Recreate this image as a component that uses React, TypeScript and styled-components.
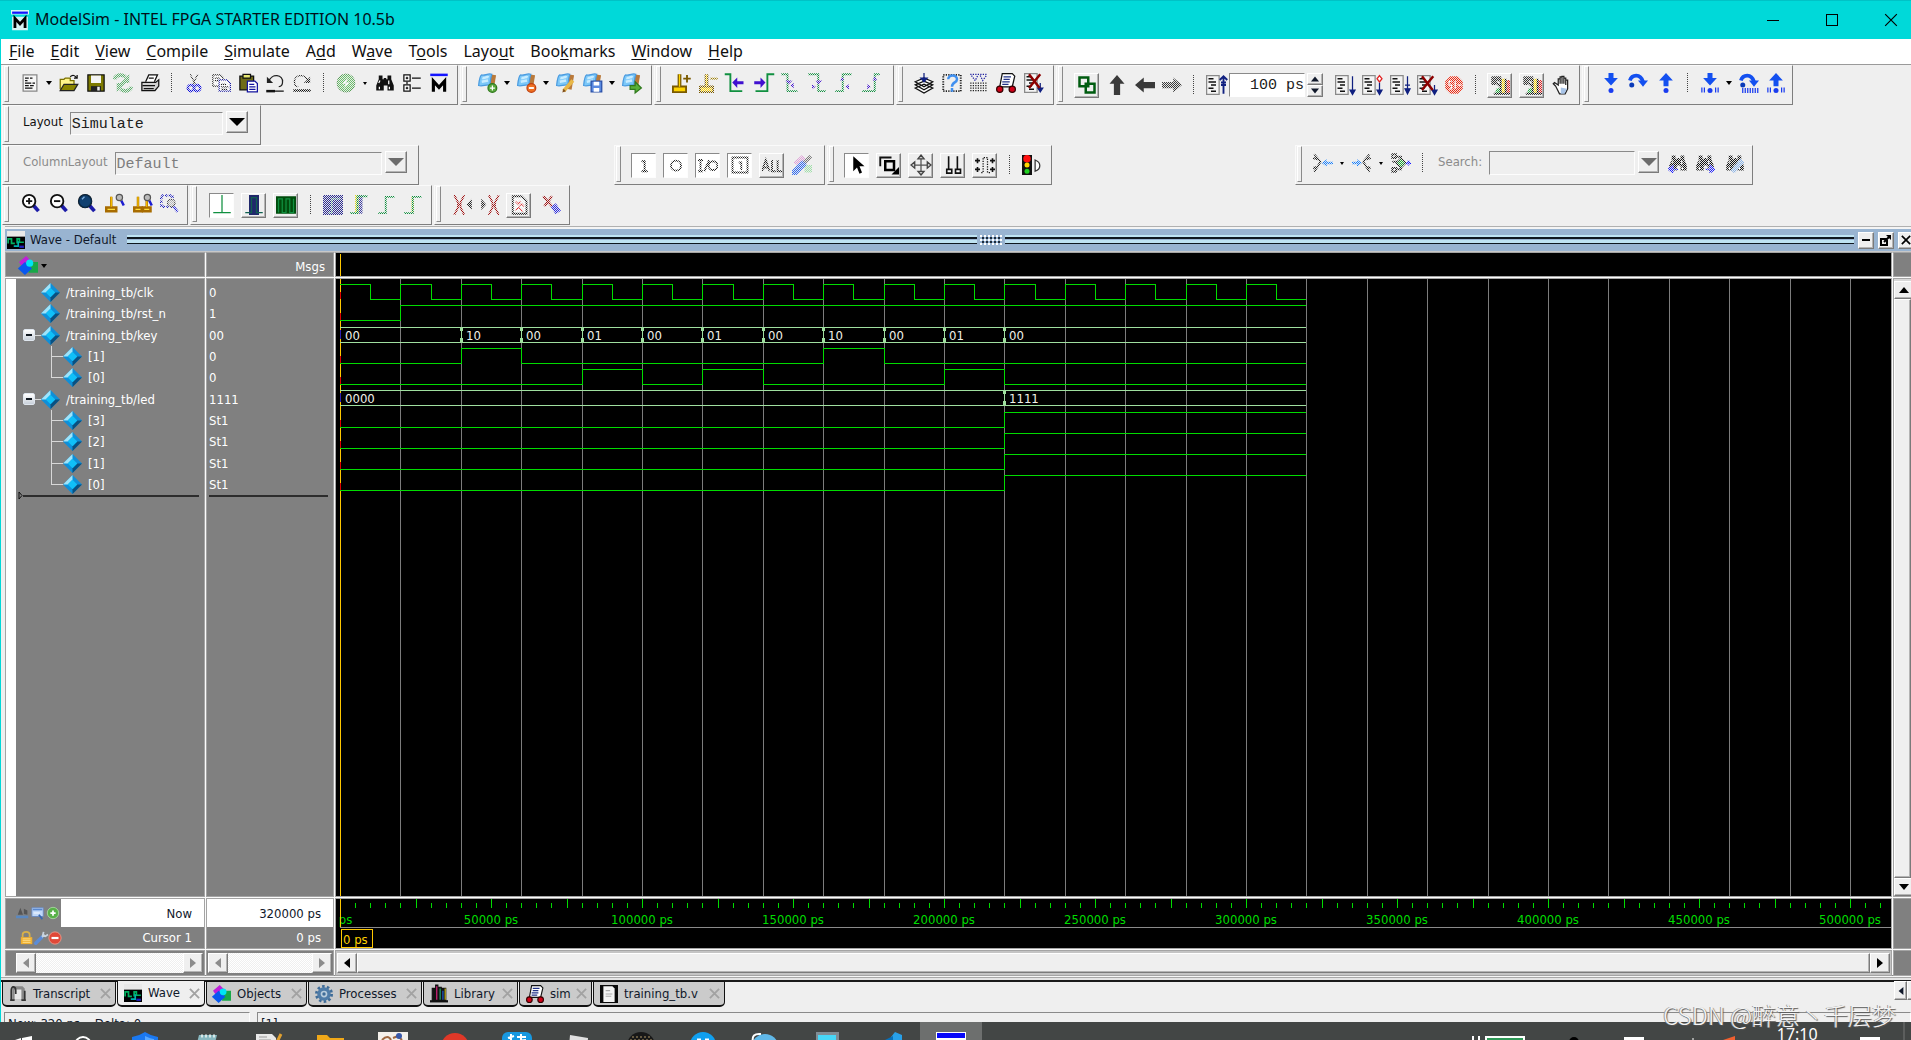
import React from "react";
import styled, { createGlobalStyle, css } from "styled-components";

const UI_FONT = `"DejaVu Sans Condensed", "Noto Sans", sans-serif`;
const CHROME_FONT = `"Noto Sans", "Open Sans", sans-serif`;
const MONO_FONT = `"Liberation Mono", monospace`;
const GREEN = "#00dc00";
const BUS = "#9fdf9f";
const FACE = "#efefef";

const GlobalStyle = createGlobalStyle`
  * { box-sizing: border-box; }
  body { margin: 0; background: ${FACE}; }
  button, input, select { font: inherit; color: inherit; margin: 0; padding: 0; border: 0; background: none; border-radius: 0; }
`;

/* ---------- window ---------- */

const Window = styled.div`
  display: flex;
  flex-direction: column;
  height: 100vh;
  overflow: hidden;
  font-family: ${UI_FONT};
  font-size: 13px;
  color: #10182a;
  background: ${FACE};
`;

const Frame = styled.div`
  flex: 1;
  min-height: 0;
  display: flex;
  flex-direction: column;
  border-left: 1px solid #00d8d8;
`;

const TitleBar = styled.header`
  display: flex;
  align-items: center;
  height: 39px;
  flex: none;
  background: #00d9d9;
  border-top: 1px solid #00c2c6;
  padding-left: 11px;
  color: #001018;
`;

const Title = styled.h1`
  margin: 0 auto 2px 6px;
  font: 400 16px/20px ${CHROME_FONT};
`;

const CaptionButtons = styled.div`
  display: flex;
  margin-right: -9px;
`;

const CaptionButton = styled.button`
  width: 59px;
  height: 38px;
  display: grid;
  place-items: center;
`;

const MenuBar = styled.nav`
  display: flex;
  align-items: flex-start;
  gap: 16px;
  height: 25px;
  flex: none;
  padding-left: 8px;
  background: #fff;
  font: 400 16px/22px ${CHROME_FONT};
  color: #101010;
`;

const MenuItem = styled.button`
  height: 23px;
`;

const Key = styled.span`
  text-decoration: underline;
  text-underline-offset: 2px;
`;

/* ---------- toolbars ---------- */

const Toolbars = styled.div`
  flex: none;
  border-top: 1px solid #9a9a9a;
  padding: 0 0 1px 1px;
`;

const ToolRow = styled.div`
  display: flex;
  height: 40px;
  gap: 2px;
`;

const Group = styled.div<{ $w: number; $gap?: number; $tall?: boolean }>`
  display: flex;
  align-items: center;
  flex: none;
  width: ${(p) => p.$w}px;
  height: 40px;
  margin-left: ${(p) => p.$gap ?? 0}px;
  padding-bottom: ${(p) => (p.$tall ? 0 : 4)}px;
  border: 1px solid;
  border-color: #fafafa #7e7e7e #7e7e7e #fafafa;
`;

const Handle = styled.span<{ $pad?: number }>`
  align-self: flex-start;
  flex: none;
  width: 5px;
  height: 36px;
  margin-left: 1px;
  margin-right: ${(p) => p.$pad ?? 7}px;
  border: 1px solid;
  border-color: #fff #8a8a8a #8a8a8a #fff;
`;

const raised = css`
  border: 1px solid;
  border-color: #fff #7a7a7a #7a7a7a #fff;
  box-shadow: inset -1px -1px #b4b4b4;
  background: ${FACE};
`;

const sunken = css`
  border: 1px solid;
  border-color: #8a8a8a #fdfdfd #fdfdfd #8a8a8a;
`;

const Tool = styled.button<{ $w?: number; $look?: "raised" | "sunken" }>`
  display: grid;
  place-items: center;
  flex: none;
  width: ${(p) => p.$w ?? 27}px;
  height: 25px;
  ${(p) =>
    p.$look &&
    css`
      width: 25px;
      margin: 0 4px 0 3px;
    `}
  ${(p) => p.$look === "raised" && raised}
  ${(p) => p.$look === "sunken" && css`${sunken} background: #fff;`}
`;

const Caret = styled.button<{ $small?: boolean }>`
  width: 12px;
  height: 25px;
  flex: none;
  display: grid;
  place-items: center;
  &::after {
    content: "";
    border: solid transparent;
    border-width: ${(p) => (p.$small ? "3px 2px 0" : "4px 3px 0")};
    border-top-color: #000;
  }
`;

const Divider = styled.span<{ $w?: number }>`
  flex: none;
  width: ${(p) => p.$w ?? 17}px;
  height: 20px;
  background: repeating-linear-gradient(#444 0 1px, transparent 1px 2px) center / 1px 20px no-repeat;
`;

const Glyph = styled.svg<{ $off?: boolean }>`
  display: block;
  width: 20px;
  height: 20px;
  overflow: visible;
  ${(p) =>
    p.$off &&
    css`
      mask-image: repeating-conic-gradient(#000 0 25%, rgba(0, 0, 0, 0.05) 0 50%);
      mask-size: 2px 2px;
    `}
`;

const ComboLabel = styled.label<{ $off?: boolean }>`
  font-size: 13px;
  line-height: 18px;
  margin: 0 7px 2px 7px;
  color: ${(p) => (p.$off ? "#8b8b8b" : "#101010")};
`;

const ComboField = styled.select<{ $w: number; $off?: boolean }>`
  appearance: none;
  ${sunken}
  width: ${(p) => p.$w}px;
  height: 23px;
  padding: 3px 0 0 1px;
  font: 400 15px/18px ${MONO_FONT};
  color: ${(p) => (p.$off ? "#7d7d7d" : "#202020")};
  opacity: 1;
`;

const SearchField = styled.input`
  ${sunken}
  width: 146px;
  height: 24px;
`;

const DropButton = styled.button<{ $off?: boolean }>`
  ${raised}
  display: grid;
  place-items: center;
  width: 22px;
  height: 22px;
  margin: 0 5px 2px 3px;
  &::after {
    content: "";
    border: solid transparent;
    border-width: 8px 8px 0;
    border-top-color: ${(p) => (p.$off ? "#6c6c6c" : "#000")};
  }
`;

const RunLength = styled.input`
  width: 76px;
  height: 24px;
  border: 1px solid;
  border-color: #8a8a8a #fff #fff #8a8a8a;
  background: #fff;
  padding: 1px 0 0 0;
  text-align: right;
  font: 400 15px/22px ${MONO_FONT};
  color: #202020;
`;

const Spinner = styled.div`
  display: flex;
  flex-direction: column;
  margin: 0 8px 0 2px;
`;

const SpinButton = styled.button`
  ${raised}
  width: 16px;
  height: 12px;
  display: grid;
  place-items: center;
`;

/* ---------- wave panel ---------- */

const Panel = styled.section`
  flex: 1;
  min-height: 0;
  display: flex;
  flex-direction: column;
  margin-left: 4px;
  border-top: 1px solid #b0b0b0;
`;

const PanelTitle = styled.div`
  display: flex;
  align-items: center;
  height: 26px;
  flex: none;
  margin-right: -3px;
  padding-left: 2px;
  background: #99b4d1;
  border-top: 2px solid #f4f4f4;
  border-bottom: 2px solid #c8c8c8;
  overflow: hidden;
`;

const PanelName = styled.h2`
  margin: 0 11px 0 5px;
  font: 400 13px/18px ${UI_FONT};
  white-space: nowrap;
`;

const Rails = styled.div`
  flex: 1;
  height: 10px;
  background: linear-gradient(
    #bfe3f2 0 2px, #101820 2px 4px, #99b4d1 4px 5px, #bfe3f2 5px 8px, #101820 8px 9px, transparent 9px);
`;

const GripDots = styled.div`
  width: 22px;
  height: 10px;
  margin: 0 3px;
  background:
    radial-gradient(circle at 1px 1px, #fff 1px, transparent 1px) 0 0 / 4px 4px,
    radial-gradient(circle at 3px 3px, #1c2a3a 1px, transparent 1px) 0 0 / 4px 4px;
`;

const PanelButton = styled.button`
  ${raised}
  width: 16px;
  height: 17px;
  margin-left: 4px;
  flex: none;
  display: grid;
  place-items: center;
`;

const WaveGrid = styled.div`
  flex: 1;
  min-height: 0;
  display: grid;
  grid-template-columns: 198px 126px minmax(0, 1fr) 17px;
  grid-template-rows: 23px minmax(0, 1fr) 49px 24px;
  gap: 3px;
  padding-left: 1px;
  background: #fbfbfb;
  border-bottom: 1px solid #8a8a8a;
`;

const Pane = styled.div<{ $color?: string }>`
  min-width: 0;
  min-height: 0;
  overflow: hidden;
  background: ${(p) => p.$color ?? "#808080"};
  outline: 1px solid #a4a4a4;
  outline-offset: 0;
  color: #fff;
`;

const HeaderPane = styled(Pane)<{ $end?: boolean }>`
  display: flex;
  align-items: center;
  justify-content: ${(p) => (p.$end ? "flex-end" : "flex-start")};
  padding: ${(p) => (p.$end ? "3px 8px 0" : "2px 13px 0")};
`;

const NamesPane = styled(Pane)`
  border-left: 10px solid #fff;
  padding-top: 3px;
`;

const ValuesPane = styled(Pane)`
  padding: 3px 5px 0 2px;
`;

const SignalList = styled.ul`
  list-style: none;
  margin: 0;
  padding: 0;
  height: 213px;
  display: grid;
  grid-template-rows: repeat(10, 1fr);
`;

const SignalRow = styled.li`
  display: flex;
  align-items: center;
  min-height: 0;
  white-space: pre;
`;

const Expander = styled.button`
  width: 12px;
  height: 12px;
  margin-left: 7px;
  flex: none;
  background: linear-gradient(#fff, #c8d0da);
  border: 1px solid #dfe6ee;
  border-radius: 2px;
  display: grid;
  place-items: center;
  &::after {
    content: "";
    width: 6px;
    height: 2px;
    background: #101820;
  }
`;

const Twig = styled.span<{ $w: number; $bare?: boolean }>`
  flex: none;
  width: ${(p) => p.$w}px;
  height: 1px;
  background: ${(p) => (p.$bare ? "transparent" : "#d8d8d8")};
`;

const Branch = styled.span<{ $last?: boolean }>`
  flex: none;
  align-self: stretch;
  width: 12px;
  margin-left: 35px;
  background:
    linear-gradient(#d8d8d8, #d8d8d8) 0 0 / 1px ${(p) => (p.$last ? "50%" : "100%")} no-repeat,
    linear-gradient(#d8d8d8, #d8d8d8) 0 50% / 100% 1px no-repeat;
`;

const SignalName = styled.span`
  margin-left: 6px;
`;

const InsertRow = styled.div<{ $inset?: number }>`
  display: flex;
  align-items: center;
  height: 9px;
  margin: -4px ${(p) => (p.$inset ? 5 : 0)}px 0 ${(p) => p.$inset ?? 0}px;
`;

const InsertLine = styled.div`
  flex: 1;
  height: 2px;
  background: #2c2c2c;
`;

const FooterRow = styled.div<{ $tall?: boolean; $light?: boolean }>`
  display: flex;
  align-items: center;
  height: ${(p) => (p.$tall ? 28 : 21)}px;
  background: ${(p) => (p.$light ? "#fff" : "#808080")};
  color: ${(p) => (p.$light ? "#10182a" : "#fff")};
  padding-right: 12px;
`;

const FooterTools = styled.div<{ $inset: number }>`
  align-self: stretch;
  display: flex;
  align-items: center;
  width: 55px;
  padding-left: ${(p) => p.$inset}px;
  background: #808080;
`;

const FooterButton = styled.button`
  width: 15px;
  height: 16px;
`;

const FooterText = styled.span`
  margin-left: auto;
`;

const Chart = styled.svg`
  display: block;
  width: 100%;
  height: 100%;
  font: 400 13px ${UI_FONT};
`;

const HScroll = styled(Pane)<{ $lead?: number }>`
  display: flex;
  align-items: stretch;
  padding: 2px 1px 2px ${(p) => p.$lead ?? 1}px;
`;

const VScroll = styled(Pane)`
  display: flex;
  flex-direction: column;
  padding-top: 2px;
  background: #d8d8d8;
`;

const ScrollButton = styled.button<{ $off?: boolean }>`
  ${raised}
  flex: none;
  width: 20px;
  min-height: 18px;
  display: grid;
  place-items: center;
  color: ${(p) => (p.$off ? "#8c8c8c" : "#000")};
`;

const Trough = styled.div`
  flex: 1;
  background: repeating-conic-gradient(#fff 0 25%, #efefef 0 50%) 0 0 / 2px 2px;
`;

const Thumb = styled.div`
  ${raised}
  flex: 1;
`;

/* ---------- bottom ---------- */

const TabStrip = styled.div`
  display: flex;
  align-items: flex-start;
  flex: none;
  height: 35px;
  padding: 5px 0 0 1px;
  background: linear-gradient(#f6f6f6 0 1px, #a8a8a8 1px 2px, #e4e4e4 2px 4px, #1a1a1a 4px 6px, ${FACE} 6px);
`;

const Tab = styled.div<{ $w: number; $active?: boolean }>`
  display: flex;
  align-items: center;
  width: ${(p) => p.$w}px;
  height: 26px;
  padding: 0 4px 0 6px;
  margin-right: 1px;
  background: ${(p) => (p.$active ? FACE : "#cbcbcb")};
  border: 1px solid #111;
  border-width: ${(p) => (p.$active ? "0 1px 2px" : "1px 1px 2px")};
  border-radius: 0 0 5px 5px;
`;

const TabName = styled.button`
  margin-left: 6px;
  font-size: 13px;
  line-height: 18px;
`;

const TabClose = styled.button`
  margin-left: auto;
  width: 12px;
  height: 16px;
  display: grid;
  place-items: center;
`;

const TabScroll = styled.div`
  margin-left: auto;
  display: flex;
  width: 17px;
  overflow: hidden;
`;

const TabScrollButton = styled.button`
  ${raised}
  flex: none;
  width: 13px;
  height: 19px;
  display: grid;
  place-items: center;
`;

const StatusBar = styled.footer`
  display: flex;
  gap: 7px;
  height: 11px;
  flex: none;
  overflow: hidden;
  padding: 1px 0 0 3px;
  background: ${FACE};
`;

const StatusCell = styled.div<{ $w?: number }>`
  ${sunken}
  flex: ${(p) => (p.$w ? "none" : 1)};
  width: ${(p) => p.$w ?? 0}px;
  height: 24px;
  padding: 2px 3px;
  line-height: 18px;
  white-space: pre;
`;

const Taskbar = styled.div`
  display: flex;
  align-items: flex-start;
  flex: none;
  height: 18px;
  overflow: hidden;
  background: #434645;
  color: #fff;
`;

const TaskButton = styled.button<{ $w?: number; $active?: boolean }>`
  flex: none;
  width: ${(p) => p.$w ?? 62}px;
  height: 40px;
  padding-top: 10px;
  display: flex;
  justify-content: center;
  background: ${(p) => (p.$active ? "#6d6f6e" : "none")};
`;

const Tray = styled.div`
  margin-left: auto;
  display: flex;
  width: 440px;
`;

const Clock = styled.time`
  margin-top: 2px;
  font: 400 16px/20px ${CHROME_FONT};
`;

const Watermark = styled.div`
  position: absolute;
  right: 15px;
  bottom: 9px;
  font: 300 24px/32px "Noto Sans CJK SC", sans-serif;
  color: #f4f4f4;
  text-shadow: 1px 1px 1px #555, -1px 0 0 #999;
  white-space: pre;
`;

/* ---------- icon drawings, all on a 16 x 16 canvas ---------- */

const page = (
  <>
    <path d="M0.500 0.500h10v15h-10z" fill="#f4f4f4" stroke="#8a8a8a" />
    <path d="M2 3h4M2 5.500h6M4 8h4M2 10.500h4M4 13h4" stroke="#111" strokeWidth="1.200" />
  </>
);
const redX = <path d="M4 1L12.500 12M13 1L4 12" stroke="#8c0000" strokeWidth="2" />;
const flag = (
  <>
    <path d="M12.500 1.500L10.500 13" stroke="#b9793a" strokeWidth="4" />
    <path d="M0.500 10C1 5 1.500 2 3 1.500C5 2.500 8 0 11 1C10 4 10 6 9.500 9.500C6 9 4 11 0.500 10Z" fill="#7cc8f8" stroke="#4a9be0" />
    <path d="M3.500 4C5 4.500 7 2.500 8.500 3.500M3 7l5-1" stroke="#c8ecff" strokeWidth="2" fill="none" />
  </>
);
const binoculars = (
  <>
    <path d="M3 2h3v3h1V4h2v1h1V2h3v3l2 5v4h-5v-4H7v4H1v-4l2-5z" fill="#111" />
    <path d="M3 8l1-2M11 6v3M3.500 11v2M11.500 11v2" stroke="#fff" />
  </>
);
const mLogo = (
  <>
    <path d="M1 1.500h14" stroke="#1414ff" strokeWidth="2" />
    <path d="M3.500 15V6.500L8 11.500L12.500 6.500V15" stroke="#000" strokeWidth="2.500" fill="none" />
  </>
);
const lens = (
  <>
    <path d="M10 10l4 4.500" stroke="#1c1ca8" strokeWidth="3" />
    <circle cx="6.500" cy="6.500" r="5" fill="#fff" stroke="#111" strokeWidth="1.500" />
  </>
);
const smallLens = (
  <>
    <path d="M13 6l2 4" stroke="#1c1cd0" strokeWidth="2" />
    <circle cx="11.500" cy="3.500" r="2.500" fill="#bbb" stroke="#555" />
  </>
);
const goldCursor = (
  <>
    <path d="M6 1v10M1.500 11.500h9v3h-9z" stroke="#7a5a00" strokeWidth="3" fill="#7a5a00" />
    <path d="M6 1v10M2 12h8v2H2z" stroke="#ffd400" fill="#ffd400" />
  </>
);
const goldPost = (x: number, w: number) => (
  <>
    <path d={`M${x} 3v8M${x - w} 11.500h${w * 2}v3h-${w * 2}z`} stroke="#a86c00" strokeWidth="2" fill="#ffe040" />
    <path d={`M${x} 3v8`} stroke="#ffc800" />
  </>
);
const shapes = (
  <>
    <path d="M0 5l6-5 4 4-4 5-4-1z" fill="#c020d8" />
    <path d="M9 5h7v9H8z" fill="#18a848" />
    <path d="M5 5l6 5.500L5 16-1 10.500z" fill="#0858f0" />
    <circle cx="9" cy="6" r="3" fill="#00e4f4" />
  </>
);
const script = (
  <>
    <path d="M5 0.500h8l2 2-2 8.500H5L3 11z" fill="#fff" stroke="#111" />
    <path d="M6 3h6M6 5h5M5 7h6M5 9h5" stroke="#223388" />
    <circle cx="3" cy="13" r="2.500" fill="#d00018" stroke="#300" />
    <circle cx="13" cy="13" r="2.500" fill="#d00018" stroke="#300" />
  </>
);
const blueDot = <circle cx="8" cy="14" r="2" fill="#1a3cf0" />;
const dashes = <path d="M1.500 11.500v4M3.500 11.500v4M12.500 11.500v4M14.500 11.500v4" stroke="#1a3cf0" />;
const downArrow = <path d="M6 0h4v4h3.500L8 10 2.500 4H6z" fill="#1450f0" />;
const upArrow = <path d="M8 0l5.500 6H10v4.500H6V6H2.500z" fill="#1450f0" />;
const overArrow = (
  <>
    <path d="M1.500 6C3 1 10 0 12 7" stroke="#1450f0" strokeWidth="3" fill="none" />
    <path d="M8 6h8l-4 5z" fill="#1450f0" />
    <circle cx="3" cy="9.500" r="2" fill="#0a3ab8" />
  </>
);
const waveIcon = (
  <>
    <path d="M0 0h16v16H0z" fill="#000" />
    <path d="M0 0h16v5H0z" fill="#e8e8e8" />
    <path d="M1 11V7h3v4h3M9 11V7h2v3h4" stroke="#00b060" strokeWidth="1.500" fill="none" />
    <path d="M6 13.500h4V9" stroke="#00b0b0" strokeWidth="1.500" fill="none" />
    <path d="M11 14h4" stroke="#2020c0" strokeWidth="2" />
  </>
);
const bluePad = <path d="M4 0h8v16H4z" fill="#20286c" />;

const ICONS: Record<string, React.ReactNode> = {
  doc: (
    <>
      <path d="M2.500 1.500h11v13h-11z" fill="#f6f6f6" stroke="#888" />
      <path d="M4 4h3M8 4h2M4 6h2M4 8h5M10 8h2M4 10h3M8 10h3M4 12h6" stroke="#111" />
    </>
  ),
  open: (
    <>
      <path d="M1 13V5h3l1-1h4v2h3v3" fill="#fff48a" stroke="#7a7000" />
      <path d="M1 14l3-5h11l-3 5z" fill="#8a8400" stroke="#222" />
      <path d="M9 3c2-2 4-1 5 1M12 4h2.500V1.500" stroke="#111" fill="none" />
    </>
  ),
  save: (
    <>
      <path d="M1.500 1.500h13v13h-13z" fill="#7d7a00" stroke="#111" />
      <path d="M4 2h8v6H4z" fill="#f4f4f4" />
      <path d="M4 10.500h8v4H4z" fill="#222" />
      <path d="M9 11h2v3H9z" fill="#eee" />
    </>
  ),
  refresh: (
    <>
      <path d="M1 5C3 1 7 1 10 3" stroke="#5cb06c" strokeWidth="3" fill="none" />
      <path d="M13 1v7H6z" fill="#5cb06c" />
      <path d="M15 11C13 15 9 15 6 13" stroke="#5cb06c" strokeWidth="3" fill="none" />
      <path d="M3 15V8h7z" fill="#5cb06c" />
    </>
  ),
  print: (
    <>
      <path d="M4.500 7L7 1.500h7L11.500 7" fill="#fff" stroke="#111" />
      <path d="M1.500 7.500h11l2.500-2v5l-3 3.500H1.500z" fill="#d0d0d0" stroke="#111" />
      <path d="M2 10h10M3 12.500h8M7 4h4" stroke="#111" />
    </>
  ),
  cut: (
    <>
      <path d="M5 1l4 8M11 1L7 9" stroke="#333" />
      <circle cx="5.500" cy="12" r="2.500" fill="none" stroke="#1010e0" strokeWidth="2" />
      <circle cx="10.500" cy="12" r="2.500" fill="none" stroke="#1010e0" strokeWidth="2" />
    </>
  ),
  copy: (
    <>
      <path d="M1.500 1.500h6l2 2v7h-8z" fill="#fff" stroke="#222" />
      <path d="M6.500 5.500h6l3 3v6h-9z" fill="#fff" stroke="#1414a0" />
      <path d="M3 4h4M3 6h3M8 9h4M8 11h6M8 13h5" stroke="#222" />
    </>
  ),
  paste: (
    <>
      <path d="M1.500 2.500h11v11h-11z" fill="#6f6c18" stroke="#111" />
      <path d="M4 1h6v3H4z" fill="#e8e870" stroke="#111" />
      <path d="M7.500 6.500h6l2 2v6.500h-8z" fill="#fff" stroke="#1414a0" />
      <path d="M9 9h4M9 11h5M9 13h5" stroke="#1414a0" />
    </>
  ),
  undo: (
    <>
      <path d="M3 7C5 0 15 1 14 7.500c0 2-1 3-3 3.500" stroke="#222" fill="none" />
      <path d="M1.500 3v5h5z" fill="#222" />
      <path d="M1 14.500h7" stroke="#111" strokeWidth="2" />
      <path d="M8 14.500h7" stroke="#111" strokeWidth="1" />
    </>
  ),
  redo: (
    <>
      <path d="M13 7C11 0 1 1 2 7.500c0 2 1 3 3 3.500" stroke="#222" fill="none" />
      <path d="M14.500 3v5h-5z" fill="#222" />
      <path d="M1 14h14" stroke="#111" strokeWidth="2" />
    </>
  ),
  compile: (
    <>
      <circle cx="8" cy="8" r="7" fill="#6cc06c" stroke="#5aa05a" />
      <path d="M10 3L5 8.500h3L6 13l5-5.500H8z" fill="#fff" />
    </>
  ),
  find: binoculars,
  tree: (
    <>
      <path d="M1.500 1.500h5v5h-5zM1.500 9.500h5v5h-5z" fill="#fff" stroke="#111" />
      <path d="M3 4h2M4 3v2M3 12h2M4 11v2M8 4h7M8 12h7M4 7v2" stroke="#111" />
    </>
  ),
  m: mLogo,
  flagAdd: (<>{flag}<circle cx="11.500" cy="12" r="3.500" fill="#5aa83c" stroke="#2f7a1c" /><path d="M9.500 12h4M11.500 10v4" stroke="#fff" /></>),
  flagDel: (<>{flag}<circle cx="11.500" cy="12" r="3.500" fill="#f07020" stroke="#c04010" /><path d="M9.500 12h4" stroke="#fff" strokeWidth="1.500" /></>),
  flagEdit: (<>{flag}<path d="M6 14.500L13.500 6" stroke="#e8b848" strokeWidth="3" /><path d="M5 15.500l1-3 2 2z" fill="#805020" /></>),
  flagSave: (<>{flag}<path d="M6.500 6.500h8.500v8.500H6.500z" fill="#5a8ae0" stroke="#2a50a8" /><path d="M8.500 7h4.500v3H8.500zM8.500 12h4.500v3H8.500z" fill="#fff" /></>),
  flagGo: (<>{flag}<path d="M6.500 10h4V7l5 5-5 4v-3h-4z" fill="#58b038" stroke="#2f7a1c" /></>),
  cursorAdd: (<>{goldCursor}<path d="M9 4.500h6M12 1.500v6" stroke="#7a5a00" strokeWidth="1.500" /></>),
  cursorDel: (<>{goldCursor}<path d="M9 4.500h6" stroke="#a08000" strokeWidth="1.500" /></>),
  edgeLeft: (<><path d="M-1 1h4.500v13.500H13" stroke="#109040" strokeWidth="1.500" fill="none" /><path d="M5 7.500l4-4v3h5v2.500H9v3z" fill="#4010d0" /></>),
  edgeRight: (<><path d="M2 14.500h9.500V1H17" stroke="#109040" strokeWidth="1.500" fill="none" /><path d="M10 7.500l-4-4v3H1v2.500h5v3z" fill="#4010d0" /></>),
  fallPrev: (<><path d="M1 1h5v13.500h8" stroke="#109040" strokeWidth="1.500" fill="none" /><path d="M4 6l3 3 3-3zM8 10l3-2v4z" fill="#4010d0" /></>),
  fallNext: (<><path d="M1 1h8v13.500h6" stroke="#109040" strokeWidth="1.500" fill="none" /><path d="M7 6l2 3 3-3zM7 11l-3-2v4z" fill="#4010d0" /></>),
  risePrev: (<><path d="M1 14.500h6V1h7" stroke="#109040" strokeWidth="1.500" fill="none" /><path d="M5 6l3 0-1.500-3zM9 11l3-2v4z" fill="#4010d0" /></>),
  riseNext: (<><path d="M1 14.500h10V1h4" stroke="#109040" strokeWidth="1.500" fill="none" /><path d="M9 6h4l-2-3zM8 11L5 9v4z" fill="#4010d0" /></>),
  stack: (<><path d="M1 12l7-3 7 3-7 4zM1 9.500l7-3 7 3-7 4zM1 7l7-3 7 3-7 4z" fill="#fff" stroke="#111" /><path d="M8 0v6M5.500 4L8 7l2.500-3z" stroke="#102080" fill="#102080" /></>),
  help: (<><path d="M1 1.500h14v13H1z" fill="none" stroke="#222" strokeWidth="1.500" strokeDasharray="1 1" /><path d="M5 5c0-4 7-4 7 0 0 3-4 2-4 6M8 12v3" stroke="#4090f0" strokeWidth="2" fill="none" /></>),
  calendar: (<><path d="M1 8h14M1 10h14M1 12h14M1 14h14" stroke="#222" strokeDasharray="1 1" /><path d="M1 1h14" stroke="#2020a0" strokeDasharray="1 1" /><path d="M2 2l3 4 2-4M9 2l2 4 3-4" stroke="#2020a0" strokeDasharray="1 1" fill="none" /></>),
  script,
  endSim: (<>{page}<path d="M13 8v6M11 12l2 3 2-3z" stroke="#102080" fill="#102080" />{redX}</>),
  link: (<path d="M2 2h7v7H2zM7 7h7v7H7z" fill="none" stroke="#005c10" strokeWidth="2" />),
  up: (<path d="M8 0l6 7h-3.500v9h-5V7H2z" fill="#3a3a3a" />),
  left: (<path d="M0 8l7-6v3.500h9v5H7V14z" fill="#3a3a3a" />),
  right: (<path d="M16 8L9 2v3.500H0v5h9V14z" fill="#3a3a3a" />),
  restart: (<>{page}<path d="M14 15V2M12 6h4M11 4l3-3 3 3M12 8h4" stroke="#102080" strokeWidth="1.500" fill="none" /></>),
  run: (<>{page}<path d="M14 1v13M12 12L14 15.500 16 12z" stroke="#102080" fill="#102080" /></>),
  runCont: (<>{page}<path d="M14 6v8M12 12l2 3.500 2-3.500z" stroke="#102080" fill="#102080" /><path d="M14 0.500l2 2.500-2 2.500-2-2.500z" stroke="#e02020" fill="#fff" /></>),
  runAll: (<>{page}<path d="M14 1v13M12 11l2 4 2-4zM12 8h4" stroke="#102080" fill="#102080" /></>),
  breakRun: (<>{page}<path d="M14 8v6M12 12l2 3.500 2-3.500z" stroke="#102080" fill="#102080" />{redX}</>),
  stop: (<><path d="M5 1h6l4 4v6l-4 4H5l-4-4V5z" fill="#f02810" /><path d="M6 5h-2v3h2v3H4M9 5v6M11 8h3" stroke="#fff" fill="none" /></>),
  profile: (<><path d="M1 1h8v4H5v3H1z" fill="#333" /><path d="M9 3h3v12H9z" fill="#ffd800" /><path d="M13 4h3v11h-3z" fill="#e02020" /><path d="M5 11l4-1v5H4z" fill="#20b040" /><path d="M5 6l3 3M3 15h13M8.500 3v11M12.500 3v11" stroke="#111" strokeWidth="1.500" /></>),
  hand: (<><path d="M3 9L1 7l1-1 3 2V3h1.500v4V1.500H8V7V1h1.500v6V2.500H11V8v-4h1.500v7l-2 4H6z" fill="#fff" stroke="#222" /><path d="M7 10l5 1-2 4H7z" fill="#a8c4e8" /></>),
  stepIn: (<>{downArrow}{blueDot}</>),
  stepOver: overArrow,
  stepOut: (<>{upArrow}{blueDot}</>),
  stepInC: (<>{downArrow}{blueDot}{dashes}</>),
  stepOverC: (<>{overArrow}<path d="M3 12v4M5 12v4M7 12v4M9 12v4M11 12v4M13 12v4M15 12v4" stroke="#1a3cf0" /></>),
  stepOutC: (<>{upArrow}{blueDot}{dashes}</>),
  filtI: (<path d="M6 5h2.500v8M6 13h5" stroke="#111" fill="none" strokeWidth="1.500" />),
  filtO: (<circle cx="8" cy="8.500" r="4" fill="none" stroke="#222" strokeWidth="1.500" />),
  filtIO: (<><path d="M0 4h4M2 4v9M0 13h4M5 13l4-9" stroke="#222" strokeWidth="1.500" fill="none" /><circle cx="12" cy="8.500" r="3.500" fill="none" stroke="#222" strokeWidth="1.500" /></>),
  filtN: (<path d="M2 2h12v12H2zM7 6h2v6" fill="none" stroke="#222" strokeWidth="1.500" />),
  filtAll: (<path d="M0 13l3-9 3 9M1.500 10h3M8 4v9h3M12.500 4v9H16" fill="none" stroke="#222" strokeWidth="1.500" />),
  filtEdit: (<><path d="M1 6L8 0l3 3-7 5z" fill="#e0a0d8" /><path d="M10 8h6v6h-6z" fill="#a0e0a8" /><path d="M2 14L9 7" stroke="#2c68f0" strokeWidth="5" strokeLinecap="round" /><path d="M10 6l5-5" stroke="#777" strokeWidth="3" /></>),
  pointer: (<path d="M5 1v12l3-3 2 5 2-1-2-5h4z" fill="#000" />),
  zoomBox: (<><path d="M1 9V2h9" stroke="#111" strokeWidth="1.500" fill="none" /><path d="M5 5h7v7H5z" fill="none" stroke="#000" strokeWidth="2" /><path d="M10 15.500h6v-6z" fill="#000" /></>),
  pan: (<><path d="M8 1v14M1 8h14" stroke="#555" /><path d="M8 0l2.500 3h-5zM8 16l2.500-3h-5zM0 8l3-2.500v5zM16 8l-3-2.500v5z" fill="#ccc" stroke="#444" /></>),
  twoCur: (<path d="M4.500 1v10M3 11.500h4v3H3zM11.500 1v10M10 11.500h4v3h-4z" fill="#fff" stroke="#111" strokeWidth="1.300" />),
  editWave: (<><path d="M0 4.500h4M0 11.500h4M2 2.500v4M2 9.500v4M12 4.500h4M12 11.500h4M14 2.500v4M14 9.500v4" stroke="#111" strokeWidth="1.300" /><path d="M5 14h1.500V2H10v12h2" stroke="#111" fill="none" strokeDasharray="1 1" /></>),
  traffic: (<><path d="M0 0h8v16H0z" fill="#111" /><circle cx="4" cy="3" r="3" fill="#ff1010" /><circle cx="4" cy="8" r="2" fill="#ffd800" /><circle cx="4" cy="13" r="2" fill="#20d020" /><path d="M10.500 4v9c5-2 5-7 0-9z" fill="#fff" stroke="#333" /></>),
  mergeL: (<><path d="M1 1l5 6-5 8M0 4l4 1M0 12l4-1" stroke="#222" strokeWidth="1.500" fill="none" /><path d="M7 8l4-3v2h5v2h-5v2z" fill="#1880ff" /></>),
  mergeR: (<><path d="M14 1L9 7l5 8M15 4l-4 1M15 12l-4-1" stroke="#222" strokeWidth="1.500" fill="none" /><path d="M8 8L4 5v2H0v2h4v2z" fill="#1880ff" /></>),
  hub: (<><path d="M1 1h3v3H1zM1 12h3v3H1zM1 7h5M4 3h4v3M4 13h4v-3" fill="none" stroke="#222" strokeWidth="1.500" /><path d="M8 4l4 4-4 4-4-4z" fill="#20a838" stroke="#222" /><path d="M12 8h4M14 6v4" stroke="#1818ff" strokeWidth="1.500" /></>),
  findPrev: (<>{binoculars}<path d="M0 13l4-3v6zM4 13h4" fill="#2020ff" stroke="#2020ff" /></>),
  findNext: (<>{binoculars}<path d="M16 13l-4-3v6zM8 13h4" fill="#2020ff" stroke="#2020ff" /></>),
  findOpt: (<>{binoculars}<path d="M6 15l8-9" stroke="#8ab4e8" strokeWidth="4" /></>),
  zoomIn: (<>{lens}<path d="M4 6.500h5M6.500 4v5" stroke="#111" strokeWidth="1.500" /></>),
  zoomOut: (<>{lens}<path d="M4 6.500h5" stroke="#111" strokeWidth="1.500" /></>),
  zoomFull: (<>{lens}<circle cx="6.500" cy="6.500" r="5" fill="#104070" stroke="#0a2a48" /><path d="M4 5l2-2" stroke="#80b0e0" /></>),
  zoomCur: (<>{goldPost(5, 4)}{smallLens}</>),
  zoomRange: (<>{goldPost(4, 3)}{goldPost(11, 3)}{smallLens}</>),
  zoomSel: (<><path d="M1 2h9v9H1z" fill="none" stroke="#2020c0" strokeWidth="2" strokeDasharray="2 1" /><circle cx="9" cy="8" r="3" fill="#bbb" stroke="#444" /><path d="M11 11l3 4" stroke="#2020e0" strokeWidth="2" /></>),
  level: (<path d="M1 14h14M8 0v14" stroke="#109040" fill="none" />),
  pulse: (<>{bluePad}<path d="M1 14h5V2h4v12h5" stroke="#106050" fill="none" /></>),
  clockWave: (<><path d="M0 1h16v14H0z" fill="#004c0c" /><path d="M2 14V3h3v11h3V3h3v11h3V3" stroke="#109040" fill="none" /></>),
  blockSel: (<><path d="M0 0h16v16H0z" fill="#2c2c90" /><path d="M4 14h3V3h7" stroke="#70b0a0" fill="none" /></>),
  editRise: (<><path d="M4 0h3v15H4z" fill="#e8e020" /><path d="M7 0h3v15H7z" fill="#4040a0" /><path d="M0 14.500h6V1h8" stroke="#109040" strokeWidth="1.500" fill="none" /></>),
  edgeUp: (<path d="M1 14.500h6V1.500h7" stroke="#109040" strokeWidth="1.500" fill="none" />),
  edgeUpY: (<><path d="M6 1h2v13H6z" fill="#f0e020" /><path d="M0 14.500h7V1.500h7" stroke="#109040" strokeWidth="1.500" fill="none" /></>),
  xLeft: (<><path d="M1 0l3 6v4l-3 6M9 0L6 6v4l3 6M4 8h2" stroke="#a01010" strokeWidth="1.500" fill="none" /><path d="M15 3v9l-4-4.500z" fill="#222" /></>),
  xRight: (<><path d="M7 0l3 6v4l-3 6M15 0l-3 6v4l3 6M10 8h2" stroke="#a01010" strokeWidth="1.500" fill="none" /><path d="M1 3v9l4-4.500z" fill="#222" /></>),
  xDoc: (<><path d="M3 1h7l4 4v10H3z" fill="#fff" stroke="#222" strokeWidth="1.500" /><path d="M5 5l2 2 2-2M8 9l2-2 2 2M5 12l3-2 3 3" stroke="#e02020" fill="none" /></>),
  xOff: (<><path d="M1 1l7 8M8 1L2 9" stroke="#a01010" strokeWidth="2" /><path d="M9 8l4 6" stroke="#2828e0" strokeWidth="5" /></>),
  shapes,
  wave: waveIcon,
  transcript: (<><path d="M3 1h9l2 2v10H3z" fill="#888" /><path d="M5 4h6v9H5z" fill="#e8e8e8" /><path d="M2 13V5c0-5 4-4 4 0v3M14 13V5M1 13.500h4M11 13.500h4" stroke="#333" strokeWidth="1.500" fill="none" /></>),
  gear: (<><circle cx="8" cy="8" r="6" fill="none" stroke="#3f6c98" strokeWidth="4" strokeDasharray="2 1.800" /><circle cx="8" cy="8" r="4.500" fill="#b8ccdc" stroke="#4f7ca8" strokeWidth="3" /><circle cx="8" cy="8" r="1.500" fill="#3f6c98" /></>),
  library: (<><path d="M0 14.500h16" stroke="#111" strokeWidth="2" /><path d="M2 3h2v11H2zM5 0h2v14H5zM8 2h2v12H8zM11 3h3v11h-3z" fill="#111" stroke="#111" /><path d="M6 1v12" stroke="#e02080" /><path d="M9 3v10" stroke="#20b070" /><path d="M11.500 5v8" stroke="#2060e0" /><path d="M13.500 3v10" stroke="#d0c020" /></>),
  file: (<><path d="M0 0h16v16H0z" fill="#0a0a0a" /><path d="M3 1h8l2 2v12H3z" fill="#f4f4f4" /><path d="M5 5h4M5 8h6M5 10h5" stroke="#aaa" /></>),
  diamond: (<><path d="M8 0l8 8-8 8-8-8z" fill="#0f8fd8" /><path d="M8 0L0 8h4l4-4z" fill="#9fe4fa" /><path d="M8 16l8-8h-4l-4 4z" fill="#0a5080" /><path d="M8 4l4 4-4 4-4-4z" fill="#10c0f8" /></>),
  anchors: (<><path d="M2 10l3-8 3 8zM9 3v6l4 1V5z" fill="#555" /><path d="M0 11h14v3H0z" fill="#5a88c0" /></>),
  note: (<><path d="M1 2h13v10H1z" fill="#c0d8f8" stroke="#6888c0" /><path d="M2 3h11v2H2z" fill="#5888d0" /><path d="M3 8h7" stroke="#fff" /><path d="M9 10l4 5" stroke="#3868b0" strokeWidth="2" /></>),
  add: (<><circle cx="8" cy="8" r="6.500" fill="#58b048" stroke="#a8d8a0" /><path d="M5 8h6M8 5v6" stroke="#fff" strokeWidth="2" /></>),
  remove: (<><circle cx="8" cy="8" r="7" fill="#e04838" stroke="#f09888" /><path d="M4 8h8" stroke="#fff" strokeWidth="2.500" /></>),
  lock: (<><path d="M3 7V4c0-4 8-4 8 0v3" stroke="#d8b048" strokeWidth="2" fill="none" /><path d="M1 7h13v8H1z" fill="#f0b030" /><path d="M3 9h9M3 11h9M3 13h9" stroke="#ffe090" /></>),
  tool: (<><path d="M2 14L9 7" stroke="#5a8cd8" strokeWidth="4" strokeLinecap="round" /><path d="M9 7l3-3M11 1l-1 4 3 1 3-2" stroke="#c8d4e0" strokeWidth="2" fill="none" /></>),
};

const Icon = ({ name, off }: { name: string; off?: boolean }) => (
  <Glyph viewBox="0 0 16 16" $off={off} aria-hidden>
    {ICONS[name]}
  </Glyph>
);

const SmallIcon = styled(Glyph)<{ $size: number }>`
  flex: none;
  width: ${(p) => p.$size}px;
  height: ${(p) => p.$size}px;
`;

type ToolSpec = { i: string; off?: boolean; look?: "raised" | "sunken"; w?: number };

const Tools = ({ items }: { items: (ToolSpec | "|" | "v" | ".")[] }) => (
  <>
    {items.map((t, k) =>
      t === "|" ? (
        <Divider key={k} />
      ) : t === "v" || t === "." ? (
        <Caret key={k} $small={t === "."} aria-label="More" />
      ) : (
        <Tool key={k} $look={t.look} $w={t.w} aria-label={t.i}>
          <Icon name={t.i} off={t.off} />
        </Tool>
      )
    )}
  </>
);

const Triangle = ({ dir, size = 10 }: { dir: "up" | "down" | "left" | "right"; size?: number }) => {
  const d = {
    up: "M0 8L5 2l5 6z",
    down: "M0 2l5 6 5-6z",
    left: "M8 0L2 5l6 5z",
    right: "M2 0l6 5-6 5z",
  }[dir];
  return (
    <svg width={size} height={size} viewBox="0 0 10 10" aria-hidden>
      <path d={d} fill="currentColor" />
    </svg>
  );
};

/* ---------- simulation data ---------- */

const MENUS = ["_File", "_Edit", "_View", "_Compile", "_Simulate", "A_dd", "W_ave", "T_ools", "Layo_ut", "Boo_kmarks", "_Window", "_Help"];

type Signal = {
  name: string;
  value: string;
  child?: boolean;
  last?: boolean;
  open?: boolean;
  bits?: [number, number][];
  bus?: [number, string][];
};

const END = 16;
const CLOCK: [number, number][] = Array.from({ length: END * 2 }, (_, i) => [i / 2, i % 2 ? 0 : 1]);
const LED: [number, number][] = [[0, 0], [11, 1]];

const SIGNALS: Signal[] = [
  { name: "/training_tb/clk", value: "0", bits: CLOCK },
  { name: "/training_tb/rst_n", value: "1", bits: [[0, 0], [1, 1]] },
  {
    name: "/training_tb/key", value: "00", open: true,
    bus: [[0, "00"], [2, "10"], [3, "00"], [4, "01"], [5, "00"], [6, "01"], [7, "00"], [8, "10"], [9, "00"], [10, "01"], [11, "00"]],
  },
  { name: "[1]", value: "0", child: true, bits: [[0, 0], [2, 1], [3, 0], [8, 1], [9, 0]] },
  { name: "[0]", value: "0", child: true, last: true, bits: [[0, 0], [4, 1], [5, 0], [6, 1], [7, 0], [10, 1], [11, 0]] },
  { name: "/training_tb/led", value: "1111", open: true, bus: [[0, "0000"], [11, "1111"]] },
  { name: "[3]", value: "St1", child: true, bits: LED },
  { name: "[2]", value: "St1", child: true, bits: LED },
  { name: "[1]", value: "St1", child: true, bits: LED },
  { name: "[0]", value: "St1", child: true, last: true, bits: LED },
];

const ORIGIN = 4;
const timeX = (t: number) => Math.round(ORIGIN + (t * 604) / 10);
const highY = (n: number) => Math.round(5 + (n * 85) / 4);
const lowY = (n: number) => highY(n) + 15;

const bitPath = (bits: [number, number][], n: number) => {
  const y = (v: number) => (v ? highY(n) : lowY(n));
  return bits.map(([t, v], i) => `${i ? "V" : `M${timeX(t)} `}${y(v)}H${timeX(bits[i + 1]?.[0] ?? END)}`).join("");
};

const WaveChart = () => (
  <Chart shapeRendering="crispEdges" role="img" aria-label="Waveforms">
    {Array.from({ length: 25 }, (_, i) => (
      <line key={i} x1={timeX(i + 1)} x2={timeX(i + 1)} y1="0" y2="100%" stroke="#7c7c7c" />
    ))}
    <line x1={ORIGIN} x2={ORIGIN} y1="0" y2="100%" stroke="#ffc800" />
    {SIGNALS.map((s, n) =>
      s.bits ? (
        <g key={n}>
          <path d={bitPath(s.bits, n)} fill="none" stroke={GREEN} />
          <path d={`M${ORIGIN} ${lowY(n) - 7}v7`} stroke="#e00000" />
        </g>
      ) : (
        <g key={n}>
          <path d={`M${ORIGIN} ${highY(n)}H${timeX(END)}M${ORIGIN} ${lowY(n)}H${timeX(END)}`} stroke={BUS} />
          {s.bus!.map(([t, v]) => (
            <g key={t}>
              {t > 0 && (
                <path
                  d={`M${timeX(t)} ${highY(n)}v15M${timeX(t) - 1} ${highY(n)}v4M${timeX(t) + 1} ${highY(n)}v4M${timeX(t) - 1} ${lowY(n)}v-4M${timeX(t) + 1} ${lowY(n)}v-4`}
                  stroke={BUS}
                />
              )}
              <text x={timeX(t) + 5} y={highY(n) + 13} fill="#f0f0e8">{v}</text>
            </g>
          ))}
          <path d={`M${ORIGIN} ${highY(n) + 3}v9`} stroke="#3020b0" />
        </g>
      )
    )}
  </Chart>
);

const Timeline = () => (
  <Chart shapeRendering="crispEdges" role="img" aria-label="Time axis">
    {Array.from({ length: 102 }, (_, i) => i + 1).map((i) => (
      <path key={i} d={`M${timeX(i / 4)} ${i % 5 ? 4 : 0}V9`} stroke={GREEN} />
    ))}
    {Array.from({ length: 11 }, (_, i) => i * 50000).map((ps) => (
      <text key={ps} x={timeX(ps / 20000)} y="25" textAnchor="middle" fill={GREEN}>{`${ps} ps`}</text>
    ))}
    <line x1={ORIGIN} x2="100%" y1="28" y2="28" stroke="#8a8a8a" />
    <line x1={ORIGIN} x2={ORIGIN} y1="0" y2="28" stroke="#ffc800" />
    <rect x="5" y="30" width="31" height="18" fill="none" stroke="#ffc800" />
    <text x="7" y="45" fill="#ffd000">0 ps</text>
  </Chart>
);

/* ---------- regions ---------- */

const TABS = [
  { name: "Transcript", icon: "transcript", w: 114 },
  { name: "Wave", icon: "wave", w: 88, active: true },
  { name: "Objects", icon: "shapes", w: 101 },
  { name: "Processes", icon: "gear", w: 114 },
  { name: "Library", icon: "library", w: 95 },
  { name: "sim", icon: "script", w: 73 },
  { name: "training_tb.v", icon: "file", w: 132 },
];

const TASKS: React.ReactNode[] = [
  <path d="M0 9L9 6v14H0zM10 6l10-2v16H10z" fill="#fff" />,
  <circle cx="14" cy="13" r="8" fill="none" stroke="#fff" strokeWidth="2" />,
  <><path d="M1 5Q8 4 14 0q6 4 13 5v20H1z" fill="#1a78f0" /><path d="M14 4q6 3 9 3v13h-9z" fill="#58a8ff" /></>,
  <><path d="M6 3h18l-5 20H1z" fill="#88b8c0" /><path d="M8 4h15" stroke="#d8e8e8" strokeWidth="3" strokeDasharray="2 2" /></>,
  <><path d="M1 2h16l4 4v18H1z" fill="#e8e8e8" /><path d="M4 8h12M4 5h8" stroke="#999" /><path d="M26 2l-5 10" stroke="#e0a030" strokeWidth="3" /></>,
  <path d="M0 3h10l3 3h14v20H0z" fill="#f0a818" />,
  <><path d="M-1 0h30v30H-1z" fill="#f4f0ea" /><path d="M3 8q6-6 9 0M14 6l5-2 4 4" stroke="#a06840" strokeWidth="2" fill="none" /><circle cx="20" cy="4" r="3" fill="#3858a8" /></>,
  <circle cx="14" cy="15" r="14" fill="#e03828" />,
  <><rect x="-1" y="0" width="30" height="30" rx="6" fill="#1898e0" /><path d="M5 6l6-2M8 2v9M14 5h9M18 2v9M13 9l10-1" stroke="#fff" strokeWidth="2" /></>,
  <path d="M5 3l18 3-1 20H3z" fill="#e0e0e0" />,
  <><circle cx="14" cy="14" r="14" fill="#181818" /><path d="M5 5h18M3 8h22" stroke="#b09868" strokeDasharray="2 2" /></>,
  <><circle cx="14" cy="13" r="13" fill="#10a0f0" /><path d="M8 8h4M16 8h4" stroke="#fff" strokeWidth="3" /></>,
  <><ellipse cx="14" cy="14" rx="13" ry="12" fill="#60b8e8" /><path d="M2 10Q0 1 10 2" stroke="#fff" strokeWidth="2" fill="none" /></>,
  <><path d="M3 0h23v20H3z" fill="#808c94" /><path d="M5 3h18v15H5z" fill="#48d8f8" /></>,
  <><path d="M16 5l4-5 7 3v25h-9z" fill="#28a0e8" /><path d="M2 12l16-8v12z" fill="#0870b8" /></>,
  <><path d="M-1 0h30v30H-1z" fill="#fff" /><path d="M0 1h28v5H0z" fill="#0808f8" /></>,
];

const CloseGlyph = ({ size = 11, color = "#a2a2a2", width = 2 }: { size?: number; color?: string; width?: number }) => (
  <svg width={size} height={size} viewBox="0 0 12 12" aria-hidden>
    <path d="M1 1l10 10M11 1L1 11" stroke={color} strokeWidth={width} />
  </svg>
);

export default function App() {
  return (
    <Window>
      <GlobalStyle />
      <TitleBar>
        <SmallIcon viewBox="0 0 16 16" $size={18} aria-hidden>
          <path d="M0-1h16v4h-16zM1 5h14v12H1z" fill="#d8f4f4" />
          {mLogo}
        </SmallIcon>
        <Title>ModelSim - INTEL FPGA STARTER EDITION 10.5b</Title>
        <CaptionButtons>
          <CaptionButton aria-label="Minimize">
            <svg width="12" height="12"><path d="M0 6h12" stroke="#000" shapeRendering="crispEdges" /></svg>
          </CaptionButton>
          <CaptionButton aria-label="Maximize">
            <svg width="14" height="14"><rect x="1" y="1" width="11" height="11" fill="none" stroke="#000" shapeRendering="crispEdges" /></svg>
          </CaptionButton>
          <CaptionButton aria-label="Close"><CloseGlyph size={14} color="#000" width={1} /></CaptionButton>
        </CaptionButtons>
      </TitleBar>
      <Frame>
        <MenuBar>
          {MENUS.map((m) => {
            const [before, rest] = m.split("_");
            return (
              <MenuItem key={m}>{before}<Key>{rest[0]}</Key>{rest.slice(1)}</MenuItem>
            );
          })}
        </MenuBar>

        <Toolbars>
          <ToolRow>
            <Group $w={456}>
              <Handle />
              <Tools items={[{ i: "doc" }, "v", { i: "open" }, { i: "save" }, { i: "refresh", off: true }, { i: "print" }, "|", { i: "cut", off: true }, { i: "copy", off: true }, { i: "paste" }, { i: "undo" }, { i: "redo", off: true }, "|", { i: "compile", off: true }, ".", { i: "find" }, { i: "tree" }, { i: "m" }]} />
            </Group>
            <Group $w={192}>
              <Handle />
              <Tools items={[{ i: "flagAdd" }, "v", { i: "flagDel" }, "v", { i: "flagEdit" }, { i: "flagSave" }, "v", { i: "flagGo" }]} />
            </Group>
            <Group $w={240}>
              <Handle />
              <Tools items={["cursorAdd", "cursorDel", "edgeLeft", "edgeRight", "fallPrev", "fallNext", "risePrev", "riseNext"].map((i, k) => ({ i, w: 27, off: k === 1 || k > 3 }))} />
            </Group>
            <Group $w={158}>
              <Handle />
              <Tools items={[{ i: "stack", w: 28 }, { i: "help" }, { i: "calendar" }, { i: "script", w: 28 }, { i: "endSim" }]} />
            </Group>
            <Group $w={524} $tall>
              <Handle $pad={8} />
              <Tools items={[{ i: "link", look: "raised" }, { i: "up", w: 28 }, { i: "left" }, { i: "right", off: true }, "|", { i: "restart" }]} />
              <RunLength aria-label="Run length" defaultValue="100 ps" />
              <Spinner>
                <SpinButton aria-label="Increase"><Triangle dir="up" size={8} /></SpinButton>
                <SpinButton aria-label="Decrease"><Triangle dir="down" size={8} /></SpinButton>
              </Spinner>
              <Tools items={[{ i: "run" }, { i: "runCont", w: 28 }, { i: "runAll" }, { i: "breakRun" }, { i: "stop", off: true }, "|", { i: "profile", look: "raised", off: true }, { i: "profile", look: "raised", off: true }, { i: "hand" }]} />
            </Group>
            <Group $w={211}>
              <Handle $pad={8} />
              <Tools items={[{ i: "stepIn" }, { i: "stepOver", w: 28 }, { i: "stepOut" }, "|", { i: "stepInC" }, "v", { i: "stepOverC" }, { i: "stepOutC" }]} />
            </Group>
          </ToolRow>
          <ToolRow>
            <Group $w={259}>
              <Handle />
              <ComboLabel htmlFor="layout">Layout</ComboLabel>
              <ComboField id="layout" $w={153}><option>Simulate</option></ComboField>
              <DropButton aria-label="Open layout list" />
            </Group>
          </ToolRow>
          <ToolRow>
            <Group $w={417}>
              <Handle />
              <ComboLabel htmlFor="columns" $off>ColumnLayout</ComboLabel>
              <ComboField id="columns" $w={267} $off disabled><option>Default</option></ComboField>
              <DropButton $off aria-label="Open column list" />
            </Group>
            <Group $w={211} $gap={193} $tall>
              <Handle />
              <Tools items={[{ i: "filtI", look: "sunken", off: true }, { i: "filtO", look: "sunken", off: true }, { i: "filtIO", look: "sunken", off: true }, { i: "filtN", look: "sunken", off: true }, { i: "filtAll", look: "raised", off: true }, { i: "filtEdit", off: true }]} />
            </Group>
            <Group $w={225} $tall>
              <Handle />
              <Tools items={[{ i: "pointer", look: "sunken" }, { i: "zoomBox", look: "raised" }, { i: "pan", look: "raised" }, { i: "twoCur", look: "raised" }, { i: "editWave", look: "raised" }, "|", { i: "traffic" }]} />
            </Group>
            <Group $w={458} $gap={241}>
              <Handle />
              <Tools items={[{ i: "mergeL", off: true }, ".", { i: "mergeR", off: true }, ".", { i: "hub", off: true }, "|"]} />
              <ComboLabel htmlFor="search" $off>Search:</ComboLabel>
              <SearchField id="search" />
              <DropButton $off aria-label="Search history" />
              <Tools items={[{ i: "findPrev", off: true }, { i: "findNext", off: true }, { i: "findOpt", off: true, w: 34 }]} />
            </Group>
          </ToolRow>
          <ToolRow>
            <Group $w={186}>
              <Handle $pad={8} />
              <Tools items={["zoomIn", "zoomOut", "zoomFull", "zoomCur"].map((i) => ({ i, w: 28 }))} />
              <Tools items={[{ i: "zoomRange" }, { i: "zoomSel", off: true }]} />
            </Group>
            <Group $w={242} $tall>
              <Handle $pad={9} />
              <Tools items={[{ i: "level", look: "sunken" }, { i: "pulse", look: "raised" }, { i: "clockWave", look: "raised" }]} />
              <Tools items={["|", { i: "blockSel", off: true }, { i: "editRise", off: true }, { i: "edgeUp", off: true }, { i: "edgeUpY", off: true }]} />
            </Group>
            <Group $w={136} $tall>
              <Handle $pad={8} />
              <Tools items={[{ i: "xLeft", off: true }, { i: "xRight", off: true }, { i: "xDoc", look: "raised", off: true }, { i: "xOff", off: true, w: 34 }]} />
            </Group>
          </ToolRow>
        </Toolbars>

        <Panel>
          <PanelTitle>
            <SmallIcon viewBox="0 0 16 16" $size={18} aria-hidden>{waveIcon}</SmallIcon>
            <PanelName>Wave - Default</PanelName>
            <Rails />
            <GripDots />
            <Rails />
            <PanelButton aria-label="Collapse"><svg width="10" height="10"><path d="M1 5h8" stroke="#000" strokeWidth="2" /></svg></PanelButton>
            <PanelButton aria-label="Undock">
              <svg width="12" height="12"><path d="M1 5h6v6H1zM4 8l5-5" fill="none" stroke="#000" strokeWidth="2" /><path d="M6 1h5v5z" fill="#000" /></svg>
            </PanelButton>
            <PanelButton aria-label="Close panel"><CloseGlyph size={10} color="#000" /></PanelButton>
          </PanelTitle>
          <WaveGrid>
            <HeaderPane>
              <SmallIcon viewBox="0 0 16 16" $size={19} aria-hidden>{shapes}</SmallIcon>
              <Caret aria-label="Signal options" />
            </HeaderPane>
            <HeaderPane $end>Msgs</HeaderPane>
            <Pane $color="#000">
              <Chart shapeRendering="crispEdges" aria-hidden>
                <line x1={ORIGIN} x2={ORIGIN} y1="1" y2="23" stroke="#ffc800" />
              </Chart>
            </Pane>
            <Pane />

            <NamesPane>
              <SignalList>
                {SIGNALS.map((s, i) => (
                  <SignalRow key={i}>
                    {s.child ? (
                      <Branch $last={s.last} />
                    ) : s.open ? (
                      <><Expander aria-label="Collapse group" /><Twig $w={6} /></>
                    ) : (
                      <Twig $w={25} $bare />
                    )}
                    <SmallIcon viewBox="0 0 16 16" $size={19} aria-hidden>{ICONS.diamond}</SmallIcon>
                    <SignalName>{s.name}</SignalName>
                  </SignalRow>
                ))}
              </SignalList>
              <InsertRow $inset={2}>
                <svg width="5" height="9" aria-hidden><path d="M1 1l3 3.500L1 8z" fill="#808080" stroke="#111" /></svg>
                <InsertLine />
              </InsertRow>
            </NamesPane>
            <ValuesPane>
              <SignalList>
                {SIGNALS.map((s, i) => <SignalRow key={i}>{s.value}</SignalRow>)}
              </SignalList>
              <InsertRow><InsertLine /></InsertRow>
            </ValuesPane>
            <Pane $color="#000"><WaveChart /></Pane>
            <VScroll>
              <ScrollButton aria-label="Scroll up"><Triangle dir="up" /></ScrollButton>
              <Thumb />
              <ScrollButton aria-label="Scroll down"><Triangle dir="down" /></ScrollButton>
            </VScroll>

            <Pane>
              <FooterRow $tall $light>
                <FooterTools $inset={10}>
                  {["anchors", "note", "add"].map((n) => (
                    <FooterButton key={n} aria-label={n}><SmallIcon viewBox="0 0 16 16" $size={14}>{ICONS[n]}</SmallIcon></FooterButton>
                  ))}
                </FooterTools>
                <FooterText>Now</FooterText>
              </FooterRow>
              <FooterRow>
                <FooterTools $inset={14}>
                  {["lock", "tool", "remove"].map((n) => (
                    <FooterButton key={n} aria-label={n}><SmallIcon viewBox="0 0 16 16" $size={14}>{ICONS[n]}</SmallIcon></FooterButton>
                  ))}
                </FooterTools>
                <FooterText>Cursor 1</FooterText>
              </FooterRow>
            </Pane>
            <Pane>
              <FooterRow $tall $light><FooterText>320000 ps</FooterText></FooterRow>
              <FooterRow><FooterText>0 ps</FooterText></FooterRow>
            </Pane>
            <Pane $color="#000"><Timeline /></Pane>
            <Pane />

            <HScroll $lead={10}>
              <ScrollButton $off aria-label="Scroll left"><Triangle dir="left" /></ScrollButton>
              <Trough />
              <ScrollButton $off aria-label="Scroll right"><Triangle dir="right" /></ScrollButton>
            </HScroll>
            <HScroll>
              <ScrollButton $off aria-label="Scroll left"><Triangle dir="left" /></ScrollButton>
              <Trough />
              <ScrollButton $off aria-label="Scroll right"><Triangle dir="right" /></ScrollButton>
            </HScroll>
            <HScroll $color="#c4c4c4">
              <ScrollButton aria-label="Scroll left"><Triangle dir="left" /></ScrollButton>
              <Thumb />
              <ScrollButton aria-label="Scroll right"><Triangle dir="right" /></ScrollButton>
            </HScroll>
            <Pane />
          </WaveGrid>
        </Panel>

        <TabStrip>
          {TABS.map((t) => (
            <Tab key={t.name} $w={t.w} $active={t.active}>
              <SmallIcon viewBox="0 0 16 16" $size={18} aria-hidden>{ICONS[t.icon]}</SmallIcon>
              <TabName>{t.name}</TabName>
              <TabClose aria-label={`Close ${t.name}`}><CloseGlyph /></TabClose>
            </Tab>
          ))}
          <TabScroll>
            <TabScrollButton aria-label="Previous tabs"><Triangle dir="left" size={8} /></TabScrollButton>
            <TabScrollButton aria-label="Next tabs" />
          </TabScroll>
        </TabStrip>
        <StatusBar>
          <StatusCell $w={246}>{"Now: 320 ns    Delta: 0"}</StatusCell>
          <StatusCell>[1]</StatusCell>
        </StatusBar>
      </Frame>
      <Taskbar>
        {TASKS.map((art, i) => (
          <TaskButton key={i} $w={i === 0 ? 52 : 62} $active={i === 15} aria-label={`Task ${i + 1}`}>
            <svg width="28" height="28" overflow="visible">{art}</svg>
          </TaskButton>
        ))}
        <Tray>
          <svg width="308" height="18" aria-hidden>
            <path d="M2 14v4M8 14v4" stroke="#fff" strokeWidth="2" />
            <path d="M15 15h38v6H15z" fill="#2f9a58" stroke="#fff" strokeWidth="2" />
            <circle cx="103" cy="20" r="5" fill="#000" />
            <path d="M153 15h20v6h-20z" fill="#fff" />
            <path d="M222 16v4" stroke="#fff" />
            <path d="M252 18l12-4v6z" fill="#f06030" />
          </svg>
          <Clock>17:10</Clock>
          <svg width="94" height="18" aria-hidden>
            <path d="M42 15h20v6H42z" fill="#fff" />
            <path d="M86 0v18" stroke="#777" />
          </svg>
        </Tray>
      </Taskbar>
      <Watermark>CSDN @醉意丶千层梦</Watermark>
    </Window>
  );
}
